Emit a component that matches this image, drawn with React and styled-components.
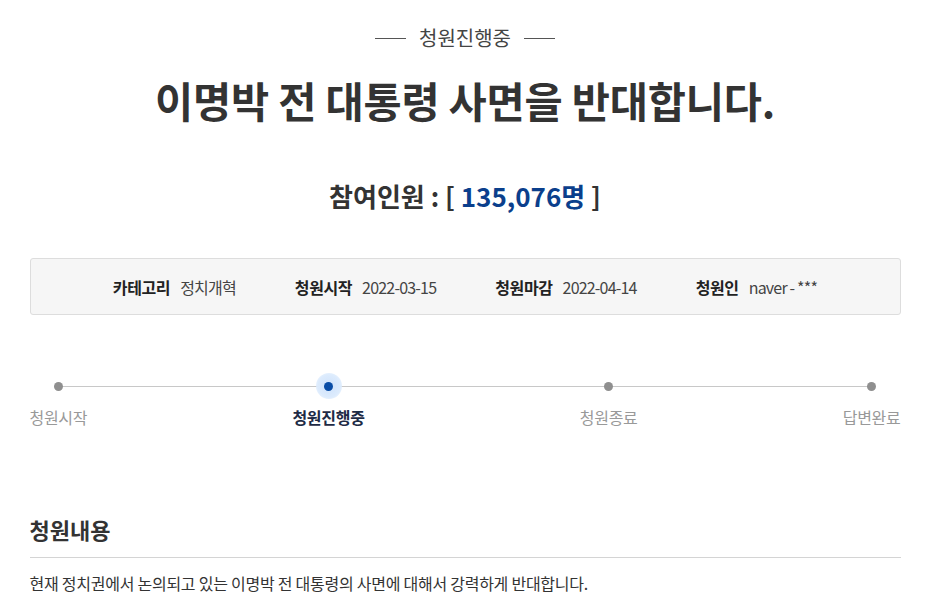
import React from 'react'
import styled, { createGlobalStyle } from 'styled-components'

const GlobalStyle = createGlobalStyle`
  html, body {
    margin: 0;
    padding: 0;
    background: #fff;
    font-family: "Noto Sans CJK KR", "Noto Sans", sans-serif;
    color: #333;
  }
`

const Page = styled.div`
  width: 871px;
  margin: 0 auto;
  padding: 23px 0 0 2px;
`

const Status = styled.div`
  display: flex;
  align-items: center;
  justify-content: center;
  gap: 13px;
  font-size: 20px;
  line-height: 30px;
  color: #444;
  &::before, &::after {
    content: '';
    width: 31px;
    height: 1px;
    background: #555;
  }
`

const Title = styled.h1`
  margin: 14px 0 0;
  text-align: center;
  font-size: 41.5px;
  font-weight: 700;
  line-height: 66px;
  color: #333;
  letter-spacing: -0.2px;
`

const Count = styled.div`
  margin-top: 43px;
  text-align: center;
  font-size: 26px;
  font-weight: 700;
  line-height: 40px;
  color: #333;
`

const Num = styled.span`
  color: #0b3f8c;
`

const InfoBox = styled.div`
  margin-top: 42px;
  height: 55px;
  border: 1px solid #ddd;
  border-radius: 3px;
  background: #f6f6f6;
  display: flex;
  align-items: center;
  justify-content: center;
  gap: 59px;
`

const InfoItem = styled.div`
  display: flex;
  align-items: center;
  gap: 10px;
  font-size: 16px;
  color: #333;
  letter-spacing: -0.4px;
`

const InfoLabel = styled.strong`
  font-weight: 700;
  color: #222;
`

const InfoValue = styled.span`
  color: #444;
  letter-spacing: -0.8px;
`

const Steps = styled.div`
  position: relative;
  margin-top: 58px;
  display: flex;
  justify-content: space-between;
`

const Track = styled.div`
  position: absolute;
  left: 28px;
  right: 29px;
  top: 13px;
  height: 1px;
  background: #c8c8c8;
`

const Step = styled.div`
  position: relative;
  display: flex;
  flex-direction: column;
  align-items: center;
  margin-right: ${p => p.$active ? '10px' : '0'};
`

const DotWrap = styled.div`
  width: 26px;
  height: 26px;
  display: flex;
  align-items: center;
  justify-content: center;
  border-radius: 50%;
  background: ${p => p.$active ? 'radial-gradient(circle, #cfe2fb 0%, #dcebfd 60%, rgba(230,241,254,0.3) 100%)' : 'transparent'};
`

const Dot = styled.span`
  width: 9px;
  height: 9px;
  border-radius: 50%;
  background: ${p => p.$active ? '#0a4da6' : '#8f8f8f'};
`

const StepLabel = styled.span`
  margin-top: 6px;
  font-size: 16px;
  line-height: 24px;
  letter-spacing: -0.3px;
  color: ${p => p.$active ? '#1e2b45' : '#999'};
  font-weight: ${p => p.$active ? 700 : 400};
`

const Section = styled.h2`
  margin: 83px 0 0;
  font-size: 22px;
  font-weight: 700;
  line-height: 34px;
  color: #333;
  padding-bottom: 11px;
  border-bottom: 1px solid #d4d4d4;
`

const Body = styled.p`
  margin: 12px 0 0;
  font-size: 16px;
  line-height: 26px;
  color: #333;
  letter-spacing: -0.25px;
`

const steps = [
  { label: '청원시작' },
  { label: '청원진행중', active: true },
  { label: '청원종료' },
  { label: '답변완료' },
]

const info = [
  ['카테고리', '정치개혁'],
  ['청원시작', '2022-03-15'],
  ['청원마감', '2022-04-14'],
  ['청원인', 'naver - ***'],
]

export default function App() {
  return (
    <>
      <GlobalStyle />
      <Page>
        <Status>청원진행중</Status>
        <Title>이명박 전 대통령 사면을 반대합니다.</Title>
        <Count>참여인원 : [ <Num>135,076명</Num> ]</Count>

        <InfoBox>
          {info.map(([k, v]) => (
            <InfoItem key={k}>
              <InfoLabel>{k}</InfoLabel>
              <InfoValue>{v}</InfoValue>
            </InfoItem>
          ))}
        </InfoBox>

        <Steps>
          <Track />
          {steps.map(s => (
            <Step key={s.label} $active={s.active}>
              <DotWrap $active={s.active}>
                <Dot $active={s.active} />
              </DotWrap>
              <StepLabel $active={s.active}>{s.label}</StepLabel>
            </Step>
          ))}
        </Steps>

        <Section>청원내용</Section>
        <Body>현재 정치권에서 논의되고 있는 이명박 전 대통령의 사면에 대해서 강력하게 반대합니다.</Body>
      </Page>
    </>
  )
}
